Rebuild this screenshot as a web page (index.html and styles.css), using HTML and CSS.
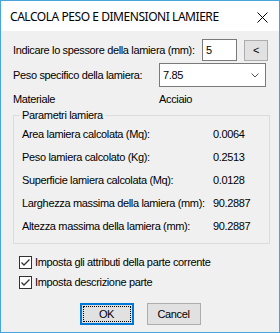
FILE: index.html
```html
<!DOCTYPE html>
<html lang="it">
<head>
  <meta charset="UTF-8">
  <meta name="viewport" content="width=device-width, initial-scale=1.0">
  <title>Calcola peso e dimensioni lamiere</title>
  <link rel="stylesheet" href="styles.css">
</head>
<body>

  <!-- Dialog Window -->
  <div class="window">

    <!-- Title Bar -->
    <div class="titlebar">
      <span class="title">CALCOLA PESO E DIMENSIONI LAMIERE</span>
      <svg class="close" width="11" height="11" viewBox="0 0 11 11">
        <path d="M0.5 0.5 L10.5 10.5 M10.5 0.5 L0.5 10.5" stroke="#000" stroke-width="1" fill="none"/>
      </svg>
    </div>

    <!-- Dialog Body -->
    <div class="dialog">

      <div class="row row-thickness">
        <span class="label label-thickness">Indicare lo spessore della lamiera (mm):</span>
        <input type="text" class="field field-thickness" value="5">
        <button class="btn btn-back">&lt;</button>
      </div>

      <div class="row row-weight">
        <span class="label label-weight">Peso specifico della lamiera:</span>
        <div class="combo">
          <span class="combo-value">7.85</span>
          <svg class="combo-arrow" width="8" height="5" viewBox="0 0 8 5">
            <path d="M0.5 0.5 L4 4 L7.5 0.5" stroke="#555" stroke-width="1" fill="none"/>
          </svg>
        </div>
      </div>

      <div class="row row-material">
        <span class="label label-weight">Materiale</span>
        <span class="value">Acciaio</span>
      </div>

      <!-- Parameters Group -->
      <fieldset class="group">
        <legend class="group-title">Parametri lamiera</legend>
        <div class="params">
          <span>Area lamiera calcolata (Mq):</span><span>0.0064</span>
          <span>Peso lamiera calcolato (Kg):</span><span>0.2513</span>
          <span>Superficie lamiera calcolata (Mq):</span><span>0.0128</span>
          <span>Larghezza massima della lamiera (mm):</span><span>90.2887</span>
          <span>Altezza massima della lamiera (mm):</span><span>90.2887</span>
        </div>
      </fieldset>

      <!-- Options -->
      <div class="options">
        <div class="check-row">
          <span class="check">
            <svg width="11" height="11" viewBox="0 0 11 11">
              <path d="M1.5 5.5 L4 8 L9.5 2.5" stroke="#333" stroke-width="1.3" fill="none"/>
            </svg>
          </span>
          <span>Imposta gli attributi della parte corrente</span>
        </div>
        <div class="check-row">
          <span class="check">
            <svg width="11" height="11" viewBox="0 0 11 11">
              <path d="M1.5 5.5 L4 8 L9.5 2.5" stroke="#333" stroke-width="1.3" fill="none"/>
            </svg>
          </span>
          <span>Imposta descrizione parte</span>
        </div>
      </div>

      <!-- Dialog Buttons -->
      <div class="actions">
        <button class="btn btn-action btn-default"><span class="focus">OK</span></button>
        <button class="btn btn-action">Cancel</button>
      </div>

    </div>
  </div>

</body>
</html>
```

FILE: styles.css
```css
/*--------------------------------------------------------------
# Global Styles
--------------------------------------------------------------*/
* {
  margin: 0;
  padding: 0;
  box-sizing: border-box;
}

body {
  font-family: "Liberation Sans", Arial, sans-serif;
  font-size: 11px;
  line-height: 13px;
  letter-spacing: -0.35px;
  white-space: nowrap;
  color: #000;
  background: #fff;
}

/*--------------------------------------------------------------
# Window Frame
--------------------------------------------------------------*/
.window {
  width: 280px;
  height: 333px;
  border: 1px solid #48a4dc;
  background: #f0f0f0;
  display: flex;
  flex-direction: column;
}

.titlebar {
  height: 30px;
  background: #fff;
  display: flex;
  align-items: center;
  justify-content: space-between;
  padding: 0 11px 0 9px;
}

.title {
  font-family: "Noto Sans", "Open Sans", sans-serif;
  font-size: 12px;
  letter-spacing: -0.45px;
  color: #000;
  padding-top: 1px;
}

.close {
  display: block;
  margin-top: 2px;
}

/*--------------------------------------------------------------
# Dialog Body
--------------------------------------------------------------*/
.dialog {
  flex: 1;
  padding: 8px 0 0 12px;
}

.row {
  display: flex;
  align-items: center;
}

.label-thickness {
  width: 189px;
}

.label-weight {
  width: 146px;
}

.field {
  width: 35px;
  height: 22px;
  border: 1px solid #7a7a7a;
  background: #fff;
  font-family: inherit;
  font-size: 11px;
  padding: 0 3px;
  outline: none;
}

.btn-back {
  width: 24px;
  height: 21px;
  margin-left: 7px;
  align-self: flex-end;
  font-size: 11px;
  padding-bottom: 1px;
}

.row-weight {
  margin-top: 2px;
}

.combo {
  width: 107px;
  height: 24px;
  border: 1px solid #7a7a7a;
  background: #fff;
  display: flex;
  align-items: center;
  justify-content: space-between;
  padding: 0 6px 0 3px;
}

.combo-arrow {
  display: block;
  margin-top: 1px;
}

.row-material {
  margin-top: 6px;
}

/*--------------------------------------------------------------
# Parameters Group
--------------------------------------------------------------*/
.group {
  width: 257px;
  margin-top: 2px;
  border: 1px solid #dcdcdc;
  padding: 6px 8px 10px 8px;
}

.group-title {
  line-height: 14px;
  padding: 0 2px;
  margin-left: -2px;
}

.params {
  display: grid;
  grid-template-columns: 191px auto;
  row-gap: 10px;
}

/*--------------------------------------------------------------
# Options
--------------------------------------------------------------*/
.options {
  margin: 12px 0 0 6px;
  display: flex;
  flex-direction: column;
  gap: 7px;
}

.check-row {
  display: flex;
  align-items: center;
  gap: 3px;
}

.check {
  width: 13px;
  height: 13px;
  border: 1px solid #333;
  background: #fff;
  display: flex;
  align-items: center;
  justify-content: center;
}

.check svg {
  display: block;
}

/*--------------------------------------------------------------
# Buttons
--------------------------------------------------------------*/
.btn {
  font-family: inherit;
  font-size: 11px;
  letter-spacing: inherit;
  color: #000;
  background: #e1e1e1;
  border: 1px solid #adadad;
}

.actions {
  margin: 14px 0 0 -12px;
  display: flex;
  justify-content: center;
  gap: 13px;
}

.btn-action {
  width: 54px;
  height: 22px;
}

.btn-default {
  border: 2px solid #0078d7;
  padding: 1px;
  display: flex;
}

.focus {
  flex: 1;
  border: 1px dotted #000;
  display: flex;
  align-items: center;
  justify-content: center;
}
```
